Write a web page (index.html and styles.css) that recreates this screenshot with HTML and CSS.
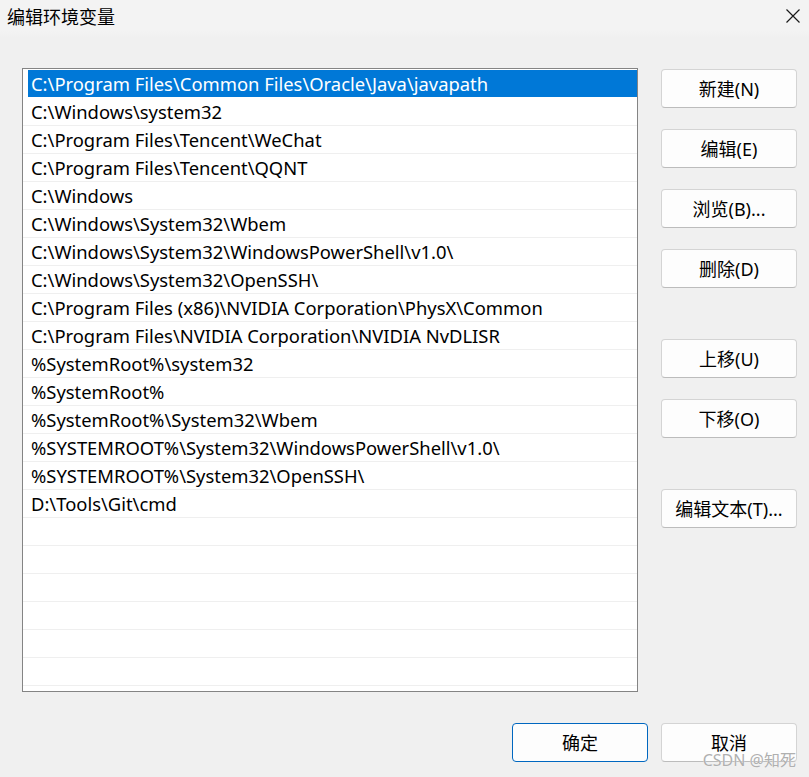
FILE: index.html
```html
<!DOCTYPE html>
<html>
<head>
<title>编辑环境变量</title>
<meta charset="utf-8">
<link rel="stylesheet" href="styles.css">
</head>
<body>
  <div class="dialog">
    <div class="titlebar">
      <span class="title">编辑环境变量</span>
      <span class="close">
        <svg width="16" height="16" viewBox="0 0 16 16"><path d="M1.5 1.5 L14.5 14.5 M14.5 1.5 L1.5 14.5" stroke="#1a1a1a" stroke-width="1.2" fill="none"/></svg>
      </span>
    </div>

    <div class="content">
      <div class="list">
        <div class="row selected">C:\Program Files\Common Files\Oracle\Java\javapath</div>
        <div class="row">C:\Windows\system32</div>
        <div class="row">C:\Program Files\Tencent\WeChat</div>
        <div class="row">C:\Program Files\Tencent\QQNT</div>
        <div class="row">C:\Windows</div>
        <div class="row">C:\Windows\System32\Wbem</div>
        <div class="row">C:\Windows\System32\WindowsPowerShell\v1.0\</div>
        <div class="row">C:\Windows\System32\OpenSSH\</div>
        <div class="row">C:\Program Files (x86)\NVIDIA Corporation\PhysX\Common</div>
        <div class="row">C:\Program Files\NVIDIA Corporation\NVIDIA NvDLISR</div>
        <div class="row">%SystemRoot%\system32</div>
        <div class="row">%SystemRoot%</div>
        <div class="row">%SystemRoot%\System32\Wbem</div>
        <div class="row">%SYSTEMROOT%\System32\WindowsPowerShell\v1.0\</div>
        <div class="row">%SYSTEMROOT%\System32\OpenSSH\</div>
        <div class="row">D:\Tools\Git\cmd</div>
        <div class="row"></div>
        <div class="row"></div>
        <div class="row"></div>
        <div class="row"></div>
        <div class="row"></div>
        <div class="row"></div>
        <div class="row"></div>
      </div>

      <div class="side">
        <button class="btn">新建(N)</button>
        <button class="btn">编辑(E)</button>
        <button class="btn">浏览(B)...</button>
        <button class="btn">删除(D)</button>
        <button class="btn group">上移(U)</button>
        <button class="btn">下移(O)</button>
        <button class="btn group">编辑文本(T)...</button>
      </div>
    </div>

    <div class="footer">
      <button class="btn btn-default">确定</button>
      <button class="btn">取消</button>
    </div>

    <div class="watermark">CSDN @知死</div>
  </div>
</body>
</html>
```

FILE: styles.css
```css
body {
  margin: 0;
  background-color: #f0f0f0;
  font-family: "Noto Sans", "Noto Sans CJK SC", sans-serif;
  color: #000;
}

.dialog {
  position: relative;
  width: 809px;
  height: 777px;
  overflow: hidden;
}

.titlebar {
  height: 38px;
  display: flex;
  align-items: center;
  justify-content: space-between;
  padding: 0 8px 0 7px;
  background: linear-gradient(to bottom, #f3f3f3 0%, #f3f3f3 80%, #f0f0f0 100%);
}

.title {
  font-size: 18px;
  margin-top: -6px;
}

.close {
  display: flex;
  margin-top: -6px;
}

.content {
  display: flex;
  gap: 23px;
  padding: 30px 0 0 22px;
}

.list {
  width: 616px;
  height: 624px;
  box-sizing: border-box;
  border: 1px solid #848484;
  background-color: #fff;
  padding-top: 1px;
  overflow: hidden;
}

.row {
  height: 27px;
  line-height: 27px;
  border-bottom: 1px solid #efefef;
  padding-left: 8px;
  font-size: 18.4px;
  white-space: nowrap;
}

.row.selected {
  background-color: #0078d7;
  color: #fff;
  margin-left: 5px;
  padding-left: 3px;
  border-bottom-color: #fff;
}

.side {
  display: flex;
  flex-direction: column;
  gap: 21px;
  padding-top: 1px;
}

.btn {
  width: 136px;
  height: 39px;
  box-sizing: border-box;
  background-color: #fdfdfd;
  border: 1px solid #d4d4d4;
  border-bottom-color: #bcbcbc;
  border-radius: 4px;
  font-family: "Noto Sans", "Noto Sans CJK SC", sans-serif;
  font-size: 18px;
  line-height: 20px;
  color: #000;
  padding: 0;
}

.side .group {
  margin-top: 30px;
}

.btn-default {
  border: 1px solid #0067c0;
}

.footer {
  display: flex;
  justify-content: flex-end;
  gap: 13px;
  padding: 31px 12px 0 0;
}

.watermark {
  position: absolute;
  right: 13px;
  bottom: 9px;
  font-size: 16px;
  line-height: 16px;
  color: #b0b0b0;
  text-shadow: 0 0 1px #fff;
}
```
